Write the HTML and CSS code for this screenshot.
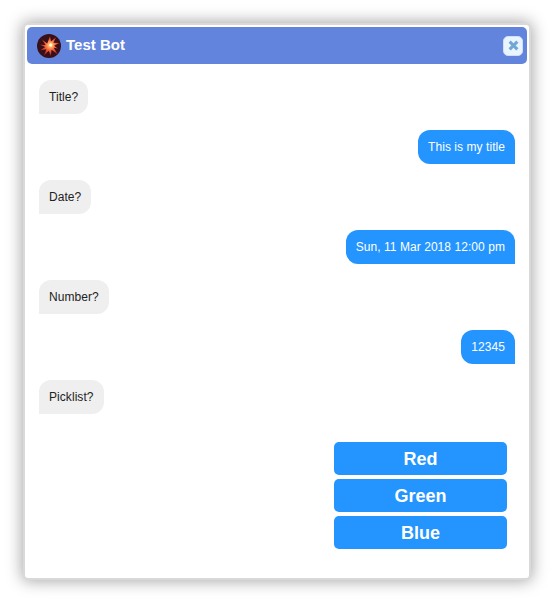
FILE: index.html
```html
<!DOCTYPE html>
<html lang="en">
<head>
<meta charset="utf-8">
<title>Test Bot</title>
<link rel="stylesheet" href="styles.css">
</head>
<body>
<main class="chat">
  <header class="chat-header">
    <svg class="avatar" viewBox="0 0 24 24" aria-hidden="true">
      <defs>
        <radialGradient id="burst" gradientUnits="userSpaceOnUse" cx="13.5" cy="11" r="10">
          <stop offset="0" stop-color="#fff8c8"/>
          <stop offset=".2" stop-color="#ffb56a"/>
          <stop offset=".5" stop-color="#f4683c"/>
          <stop offset="1" stop-color="#b82a1a"/>
        </radialGradient>
      </defs>
      <circle cx="12" cy="12" r="12" fill="#38101a"/>
      <path fill="url(#burst)" d="M13 2.2l1 5.300 5-4.200-2.600 5.400 5.800.4-5 2.600 3.500 2.800-4-.7 4 6.400-6.200-4.400-.6 6.200-2.200-5.200-4.700 4.700 2.400-6.200-6 .9 4.800-3.200-5.200-2.300 5.600.2-3.600-5.400 5.200 4z"/>
      <circle cx="13.700" cy="11" r="1.600" fill="#fffbd8"/>
    </svg>
    <h1 class="chat-title">Test Bot</h1>
    <button class="close" aria-label="Close">
      <svg class="close-icon" viewBox="0 0 10 10"><path d="M1.500 1.500l7 7M8.500 1.500l-7 7"/></svg>
    </button>
  </header>
  <section class="messages">
    <p class="bubble bot">Title?</p>
    <p class="bubble user">This is my title</p>
    <p class="bubble bot">Date?</p>
    <p class="bubble user">Sun, 11 Mar 2018 12:00 pm</p>
    <p class="bubble bot">Number?</p>
    <p class="bubble user">12345</p>
    <p class="bubble bot">Picklist?</p>
  </section>
  <div class="choices">
    <button class="choice">Red</button>
    <button class="choice">Green</button>
    <button class="choice">Blue</button>
  </div>
</main>
</body>
</html>
```
FILE: styles.css
```css
* { box-sizing: border-box; }

body {
  margin: 0;
  padding: 23px 27px 0 23px;
  height: 603px;
  overflow: hidden;
  background: #fff;
  font-family: "Liberation Sans", Arial, sans-serif;
}

.chat {
  height: 557px;
  padding: 2px;
  border: 2px solid #d9d9d9;
  border-radius: 5px;
  background: #fff;
  box-shadow: 0 0 16px 1px rgba(0, 0, 0, .36);
}

.chat-header {
  display: flex;
  align-items: center;
  height: 37px;
  padding: 0 5px 0 10px;
  border-radius: 5px;
  background: #6284dc;
}

.avatar {
  width: 24px;
  height: 24px;
}

.chat-title {
  margin: 0 auto 2px 5px;
  color: #fff;
  font-size: 15px;
  line-height: 18px;
}

.close {
  display: grid;
  place-items: center;
  width: 20px;
  height: 20px;
  margin-right: -1px;
  padding: 0;
  border: 1px solid #cce0f8;
  border-radius: 5px;
  background: #eaf4fe;
}

.close-icon {
  width: 11px;
  height: 11px;
  fill: none;
  stroke: #71a8d3;
  stroke-width: 2.8;
}

.messages {
  display: flex;
  flex-direction: column;
  gap: 16px;
  padding: 16px 12px 0;
}

.bubble {
  height: 34px;
  margin: 0;
  padding: 10px;
  border-radius: 12px;
  font-size: 12px;
  line-height: 14px;
  letter-spacing: .06px;
  white-space: nowrap;
}

.bot {
  align-self: flex-start;
  border-bottom-left-radius: 0;
  background: #efefef;
  color: #222;
}

.user {
  align-self: flex-end;
  border-bottom-right-radius: 0;
  background: #2495ff;
  color: #fff;
}

.choices {
  display: flex;
  flex-direction: column;
  gap: 4px;
  width: 173px;
  margin: 28px 20px 0 auto;
}

.choice {
  height: 33px;
  padding: 1px 0 0;
  border: 0;
  border-radius: 5px;
  background: #2495ff;
  color: #fff;
  font: bold 18px/32px "Liberation Sans", Arial, sans-serif;
}
```
